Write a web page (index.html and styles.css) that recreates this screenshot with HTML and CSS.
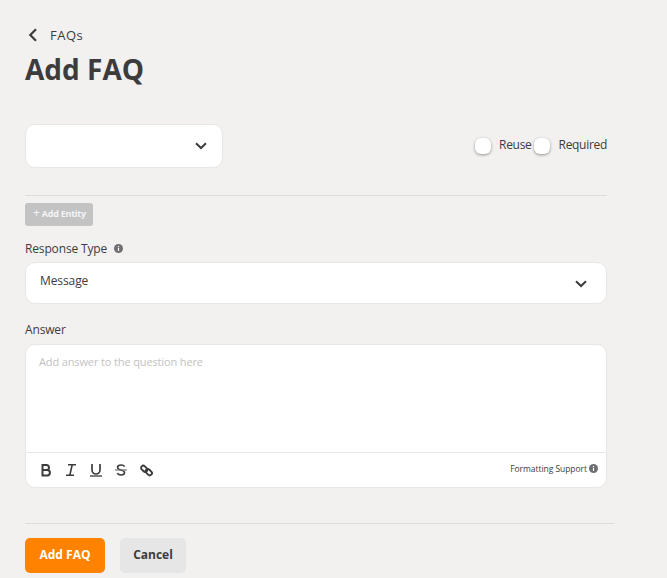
FILE: index.html
```html
<!DOCTYPE html>
<html lang="en">
<head>
<meta charset="utf-8">
<title>Add FAQ</title>
<link rel="stylesheet" href="styles.css">
</head>
<body>
<main class="page">
  <div class="form">
    <a class="back">
      <svg class="back-icon" width="10" height="14" viewBox="0 0 10 14"><path d="M8 1.200 2.300 7 8 12.800" fill="none" stroke="#3c3c3e" stroke-width="2.200"/></svg>
      <span>FAQs</span>
    </a>
    <h1 class="title">Add FAQ</h1>
    <div class="entity-row">
      <div class="select entity-select">
        <svg class="chevron" width="12" height="8" viewBox="0 0 12 8"><path d="M1 1.200 6 6 11 1.200" fill="none" stroke="#3c3c3e" stroke-width="2"/></svg>
      </div>
      <div class="toggles">
        <span class="check"></span><span class="check-label reuse">Reuse</span>
        <span class="check"></span><span class="check-label">Required</span>
      </div>
    </div>
    <hr class="rule">
    <button class="add-entity" type="button"><span class="plus">+</span> Add Entity</button>
    <div class="label label-type">Response Type
      <svg class="info info-type" width="9" height="9" viewBox="0 0 9 9"><circle cx="4.500" cy="4.500" r="4.500" fill="#6f6f72"/><path d="M4.500 2v.9M4.500 3.800V7" stroke="#fff" stroke-width="1.200"/></svg>
    </div>
    <div class="select type-select">
      <span class="type-value">Message</span>
      <svg class="chevron" width="12" height="8" viewBox="0 0 12 8"><path d="M1 1.200 6 6 11 1.200" fill="none" stroke="#3c3c3e" stroke-width="2"/></svg>
    </div>
    <div class="label label-answer">Answer</div>
    <div class="editor">
      <div class="editor-text">Add answer to the question here</div>
      <div class="toolbar">
        <div class="tools">
          <svg width="12" height="14" viewBox="0 0 12 14"><path d="M2.500 2h4a2.500 2.500 0 0 1 0 5h-4zM2.500 7h4.700a2.700 2.700 0 0 1 0 5.400H2.500z" fill="none" stroke="#3c3c3e" stroke-width="2"/></svg>
          <svg width="12" height="14" viewBox="0 0 12 14"><path d="M3 1.800h8M1 12.200h8M7.200 1.800 4.800 12.200" fill="none" stroke="#3c3c3e" stroke-width="1.600"/></svg>
          <svg width="12" height="14" viewBox="0 0 12 14"><path d="M2 1v6a4 4 0 0 0 8 0V1" fill="none" stroke="#3c3c3e" stroke-width="1.700"/><path d="M0 13h12" stroke="#3c3c3e" stroke-width="1.300"/></svg>
          <svg width="12" height="14" viewBox="0 0 12 14"><path d="M9.700 3.600C9 2.500 7.600 2 6 2 4 2 2.600 3 2.600 4.400c0 3.300 6.900 1.900 6.900 5.200C9.500 11 8 12 6 12c-1.700 0-3.100-.6-3.800-1.800" fill="none" stroke="#3c3c3e" stroke-width="1.600"/><path d="M0 7h12" stroke="#77777a" stroke-width="1.200"/></svg>
          <svg width="13" height="13" viewBox="0 0 13 13"><rect x="0.700" y="2.600" width="7" height="4.400" rx="2.200" transform="rotate(45 4.200 4.800)" fill="none" stroke="#3c3c3e" stroke-width="1.900"/><rect x="5.300" y="6" width="7" height="4.400" rx="2.200" transform="rotate(45 8.800 8.200)" fill="none" stroke="#3c3c3e" stroke-width="1.900"/></svg>
        </div>
        <div class="format">Formatting Support
          <svg class="info" width="9" height="9" viewBox="0 0 9 9"><circle cx="4.500" cy="4.500" r="4.500" fill="#6f6f72"/><path d="M4.500 2v.9M4.500 3.800V7" stroke="#fff" stroke-width="1.200"/></svg>
        </div>
      </div>
    </div>
  </div>
  <hr class="rule footer-rule">
  <div class="actions">
    <button class="btn primary" type="button">Add FAQ</button>
    <button class="btn secondary" type="button">Cancel</button>
  </div>
</main>
</body>
</html>
```
FILE: styles.css
```css
* { box-sizing: border-box; }
html, body { margin: 0; height: 100%; }
body {
  background: #f2f1f0;
  color: #3c3c3e;
  font-family: "Open Sans", "Noto Sans", sans-serif;
  overflow: hidden;
}
.page { padding: 26px 53px 0 25px; }
.form { width: 582px; }
.back {
  display: flex;
  align-items: center;
  gap: 12px;
  height: 18px;
  padding-left: 3px;
  font-size: 13px;
  letter-spacing: 0.5px;
  font-weight: 500;
}
.title {
  margin: 6px 0 0;
  font-size: 28px;
  line-height: 38px;
  font-weight: 700;
  color: #3c3c3e;
}
.entity-row {
  display: flex;
  justify-content: space-between;
  align-items: center;
  margin-top: 36px;
}
.select {
  display: flex;
  align-items: center;
  justify-content: space-between;
  background: #fff;
  border: 1px solid #e8e7e6;
  border-radius: 10px;
}
.entity-select {
  width: 198px;
  height: 44px;
  justify-content: flex-end;
  padding-right: 15px;
}
.toggles {
  display: flex;
  align-items: center;
  font-size: 12px;
  letter-spacing: -0.3px;
}
.check {
  width: 16px;
  height: 16px;
  background: #fff;
  border-radius: 6px;
  box-shadow: 0 1px 3px rgba(0, 0, 0, 0.4);
}
.check-label { margin-left: 9px; padding-bottom: 4px; }
.reuse { margin-left: 8px; margin-right: 2px; }
.rule {
  margin: 27px 0 0;
  border: 0;
  border-top: 1px solid #dddcdb;
}
.add-entity {
  display: block;
  margin-top: 7px;
  width: 68px;
  height: 23px;
  padding: 0 0 2px 1px;
  border: 0;
  border-radius: 3px;
  background: #c3c3c3;
  color: #f4f4f4;
  font: 700 9px "Open Sans", sans-serif;
  letter-spacing: -0.25px;
}
.plus { font-size: 12px; font-weight: 400; line-height: 1; }
.label { font-size: 12px; line-height: 16px; letter-spacing: -0.15px; }
.label-type { margin-top: 15px; }
.info-type { margin-left: 4px; }
.type-select {
  height: 42px;
  margin-top: 5px;
  padding: 0 19px 0 14px;
  font-size: 12px;
  letter-spacing: -0.1px;
}
.type-value { padding-bottom: 6px; }
.type-select .chevron { margin-top: 2px; }
.label-answer { margin-top: 18px; }
.editor {
  height: 144px;
  margin-top: 6px;
  background: #fff;
  border: 1px solid #e8e7e6;
  border-radius: 10px;
  display: flex;
  flex-direction: column;
}
.editor-text {
  flex: 1;
  padding: 9px 13px;
  font-size: 11px;
  line-height: 16px;
  letter-spacing: -0.13px;
  color: #c2c2c4;
}
.toolbar {
  height: 35px;
  border-top: 1px solid #e8e7e6;
  display: flex;
  align-items: center;
  justify-content: space-between;
  padding: 0 8px 0 14px;
}
.tools { display: flex; gap: 13px; align-items: center; }
.format {
  display: flex;
  align-items: center;
  gap: 2px;
  font-size: 8.500px;
  letter-spacing: -0.05px;
  margin-top: -4px;
}
.footer-rule { margin-top: 35px; width: 589px; }
.actions { display: flex; gap: 15px; margin-top: 14px; }
.btn {
  height: 35px;
  border: 0;
  border-radius: 5px;
  padding: 0 0 2px;
  font: 700 12px "Open Sans", sans-serif;
}
.primary { width: 80px; background: #ff8300; color: #fff; }
.secondary { width: 66px; background: #e7e6e6; color: #3c3c3e; }
```
